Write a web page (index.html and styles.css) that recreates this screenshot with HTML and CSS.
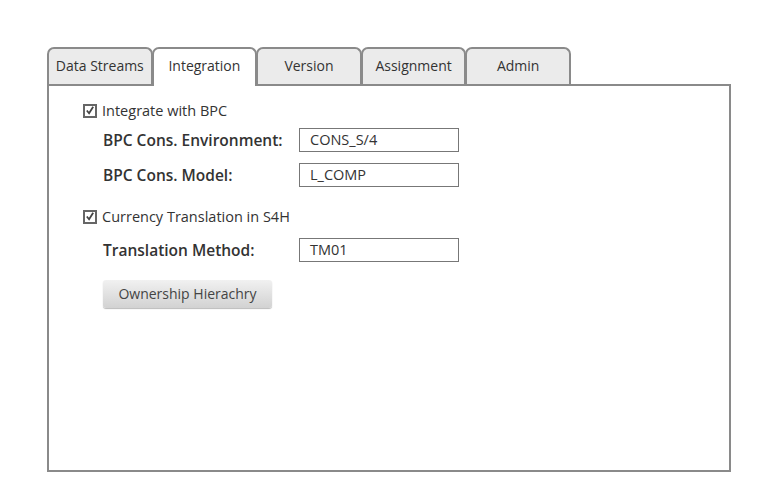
FILE: index.html
```html
<!DOCTYPE html>
<html>
<head>
<meta charset="utf-8">
<link rel="stylesheet" href="styles.css">
</head>
<body>
<div class="wrap">
  <div class="tabs">
    <div class="tab">Data Streams</div>
    <div class="tab active">Integration</div>
    <div class="tab">Version</div>
    <div class="tab">Assignment</div>
    <div class="tab">Admin</div>
  </div>
  <div class="panel">
    <label class="check first"><span class="box"><svg width="11" height="11" viewBox="0 0 11 11"><path d="M2 5.5 L4.5 8.5 L9 1.5" fill="none" stroke="#444" stroke-width="2"/></svg></span>Integrate with BPC</label>
    <div class="row"><span class="lbl">BPC Cons. Environment:</span><span class="input">CONS_S/4</span></div>
    <div class="row"><span class="lbl">BPC Cons. Model:</span><span class="input">L_COMP</span></div>
    <label class="check second"><span class="box"><svg width="11" height="11" viewBox="0 0 11 11"><path d="M2 5.5 L4.5 8.5 L9 1.5" fill="none" stroke="#444" stroke-width="2"/></svg></span>Currency Translation in S4H</label>
    <div class="row tm"><span class="lbl">Translation Method:</span><span class="input">TM01</span></div>
    <div class="btnrow"><span class="btn">Ownership Hierachry</span></div>
  </div>
</div>
</body>
</html>
```
FILE: styles.css
```css
html, body { margin: 0; padding: 0; background: #fff; }
body { font-family: "Open Sans", "Noto Sans", sans-serif; color: #333; }
.wrap { padding: 47px 0 0 47px; width: 684px; }
.tabs { display: flex; height: 37px; }
.tab {
  box-sizing: border-box;
  width: 105.6px; height: 38px;
  margin-right: -1px;
  border: 2px solid #8a8a8a; border-bottom: none;
  border-radius: 7px 7px 0 0;
  background: #ebebeb;
  font-size: 14px; line-height: 33px; text-align: center;
  color: #333;
  position: relative; z-index: 1;
}
.tab.active { background: #fff; z-index: 3; height: 39px; }
.panel {
  box-sizing: border-box;
  height: 388px;
  border: 2px solid #8a8a8a;
  padding: 16px 0 0 34px;
  position: relative; z-index: 2;
}
.check { display: flex; align-items: center; font-size: 14.5px; height: 17px; }
.check.second { margin-top: 21px; }
.box {
  box-sizing: border-box; width: 14px; height: 14px;
  border: 2px solid #666; margin-right: 5px;
  display: flex; align-items: center; justify-content: center;
}
.row { display: flex; align-items: center; margin-top: 9px; padding-left: 20px; height: 24px; }
.check.first + .row { margin-top: 9px; }
.row + .row { margin-top: 11px; }
.row.tm { margin-top: 13px; }
.lbl { width: 196px; font-size: 15.5px; font-weight: 600; color: #333; }
.input {
  box-sizing: border-box; width: 160px; height: 24px;
  border: 1px solid #777; background: #fff;
  font-size: 14.5px; line-height: 22px; padding-left: 10px;
}
.btnrow { padding-left: 20px; margin-top: 18px; }
.btn {
  display: inline-block; box-sizing: border-box;
  width: 169px; height: 28px; line-height: 27px; text-align: center;
  font-size: 14px; color: #444;
  background: linear-gradient(#f1f1f1, #d2d2d2);
  border-radius: 3px; box-shadow: 0 1px 1px #bbb;
}
```
